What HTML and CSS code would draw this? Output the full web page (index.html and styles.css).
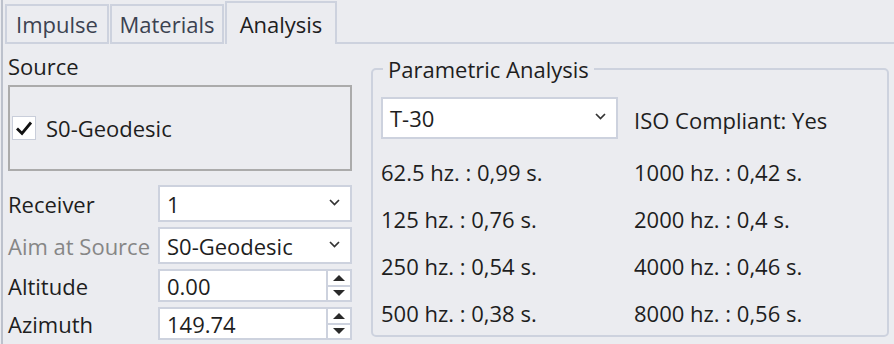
FILE: index.html
```html
<!DOCTYPE html>
<html lang="en">

<head>
    <meta charset="UTF-8">
    <title>Analysis</title>
    <link rel="stylesheet" href="styles.css">
</head>

<body>
    <div class="window">
        <div class="tabs">
            <div class="tab tab-impulse">Impulse</div>
            <div class="tab tab-materials">Materials</div>
            <div class="tab tab-analysis active">Analysis</div>
            <div class="tab-fill"></div>
        </div>

        <div class="panel">
            <div class="source-col">
                <div class="section-title">Source</div>
                <div class="source-box">
                    <label class="check">
                        <span class="check-box">
                            <svg width="20" height="20" viewBox="0 0 20 20">
                                <path d="M3 10.5 L8 15.5 L17 4.5" fill="none" stroke="#111" stroke-width="2.8" />
                            </svg>
                        </span>
                        S0-Geodesic
                    </label>
                </div>

                <div class="form">
                    <span class="label">Receiver</span>
                    <div class="combo tall">
                        <span>1</span>
                        <svg class="chevron" width="11" height="7" viewBox="0 0 11 7">
                            <path d="M1 1 L5.5 5.5 L10 1" fill="none" stroke="#333" stroke-width="1.7" />
                        </svg>
                    </div>

                    <span class="label disabled">Aim at Source</span>
                    <div class="combo tall">
                        <span>S0-Geodesic</span>
                        <svg class="chevron" width="11" height="7" viewBox="0 0 11 7">
                            <path d="M1 1 L5.5 5.5 L10 1" fill="none" stroke="#333" stroke-width="1.7" />
                        </svg>
                    </div>

                    <span class="label">Altitude</span>
                    <div class="spinner">
                        <span class="spin-value">0.00</span>
                        <div class="spin-buttons">
                            <span class="spin-up"><i class="arrow-up"></i></span>
                            <span class="spin-down"><i class="arrow-down"></i></span>
                        </div>
                    </div>

                    <span class="label">Azimuth</span>
                    <div class="spinner">
                        <span class="spin-value">149.74</span>
                        <div class="spin-buttons">
                            <span class="spin-up"><i class="arrow-up"></i></span>
                            <span class="spin-down"><i class="arrow-down"></i></span>
                        </div>
                    </div>
                </div>
            </div>

            <fieldset class="parametric">
                <legend>Parametric Analysis</legend>
                <div class="results">
                    <div class="combo metric">
                        <span>T-30</span>
                        <svg class="chevron" width="11" height="7" viewBox="0 0 11 7">
                            <path d="M1 1 L5.5 5.5 L10 1" fill="none" stroke="#333" stroke-width="1.7" />
                        </svg>
                    </div>
                    <span class="iso">ISO Compliant: Yes</span>

                    <span class="value">62.5 hz. : 0,99 s.</span>
                    <span class="value">1000 hz. : 0,42 s.</span>
                    <span class="value">125 hz. : 0,76 s.</span>
                    <span class="value">2000 hz. : 0,4 s.</span>
                    <span class="value">250 hz. : 0,54 s.</span>
                    <span class="value">4000 hz. : 0,46 s.</span>
                    <span class="value">500 hz. : 0,38 s.</span>
                    <span class="value">8000 hz. : 0,56 s.</span>
                </div>
            </fieldset>
        </div>
    </div>
</body>

</html>
```

FILE: styles.css
```css
body {
    margin: 0;
    background-color: #EBECF0;
    font-family: "Open Sans", "Noto Sans", sans-serif;
    font-size: 22px;
    color: #1E1E1E;
}

.window {
    height: 344px;
    margin-left: 1px;
    border-left: 2px solid #BCC1CC;
    overflow: hidden;
}

/* tab strip */

.tabs {
    display: flex;
    align-items: flex-end;
    height: 44px;
    padding-left: 2px;
}

.tab {
    box-sizing: border-box;
    display: flex;
    align-items: center;
    justify-content: center;
    height: 40px;
    margin-right: 1px;
    border: 2px solid #CDD2DE;
    color: #3C4250;
}

.tab-impulse {
    width: 104px;
}

.tab-materials {
    width: 114px;
}

.tab-analysis {
    width: 112px;
}

.tab.active {
    height: 43px;
    margin-right: 0;
    border-bottom: none;
    color: #1E1E1E;
}

.tab-fill {
    flex: 1;
    height: 44px;
    box-sizing: border-box;
    border-bottom: 2px solid #CDD2DE;
}

/* panel */

.panel {
    display: flex;
    padding-left: 5px;
}

.source-col {
    width: 344px;
}

.section-title {
    height: 30px;
    line-height: 30px;
    margin: 7px 0 4px;
}

.source-box {
    box-sizing: border-box;
    height: 86px;
    border: 2px solid #ABABAB;
    display: flex;
    align-items: center;
    padding-left: 2px;
}

.check {
    display: flex;
    align-items: center;
    gap: 10px;
}

.check-box {
    box-sizing: border-box;
    width: 24px;
    height: 24px;
    background-color: #FFF;
    border: 1px solid #C9CEDA;
    display: flex;
    align-items: center;
    justify-content: center;
}

.form {
    display: grid;
    grid-template-columns: 150px 194px;
    grid-template-rows: 37px 37px 33px 33px;
    row-gap: 5px;
    margin-top: 14px;
}

.label {
    display: flex;
    align-items: center;
}

.label.disabled {
    color: #868686;
}

.combo {
    box-sizing: border-box;
    display: flex;
    align-items: center;
    justify-content: space-between;
    padding: 0 10px 0 7px;
    background-color: #FFF;
    border: 2px solid #CDD2DE;
}

.chevron {
    margin-top: -3px;
}

.spinner {
    box-sizing: border-box;
    display: flex;
    background-color: #FFF;
    border: 2px solid #CDD2DE;
}

.spin-value {
    flex: 1;
    display: flex;
    align-items: center;
    padding-left: 7px;
}

.spin-buttons {
    width: 22px;
    display: flex;
    flex-direction: column;
    border-left: 2px solid #CDD2DE;
}

.spin-up,
.spin-down {
    flex: 1;
    display: flex;
    align-items: center;
    justify-content: center;
}

.spin-up {
    border-bottom: 2px solid #CDD2DE;
}

.arrow-up {
    border-left: 6px solid transparent;
    border-right: 6px solid transparent;
    border-bottom: 6px solid #2A2A2A;
}

.arrow-down {
    border-left: 6px solid transparent;
    border-right: 6px solid transparent;
    border-top: 6px solid #2A2A2A;
}

/* parametric analysis group */

.parametric {
    box-sizing: border-box;
    width: 518px;
    height: 280px;
    margin: 13px 0 0 19px;
    padding: 16px 0 0 8px;
    border: 2px solid #CDD2DE;
    border-radius: 5px;
}

.parametric legend {
    margin-left: 2px;
    padding: 0 5px;
    line-height: 24px;
}

.results {
    display: grid;
    grid-template-columns: 253px 1fr;
    grid-template-rows: 52px repeat(4, 47px);
}

.combo.metric {
    width: 237px;
    height: 42px;
}

.iso {
    height: 42px;
    line-height: 42px;
    margin-top: 2px;
}

.value {
    line-height: 47px;
}
```
